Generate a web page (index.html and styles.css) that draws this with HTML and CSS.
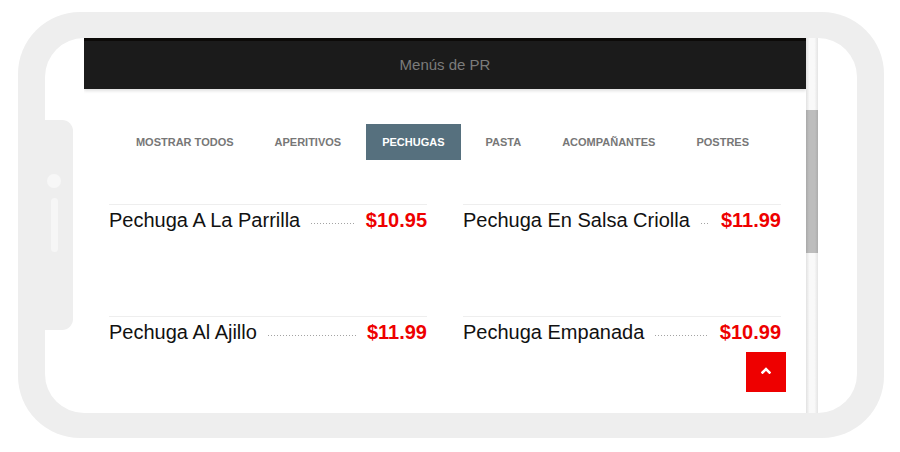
FILE: index.html
```html
<!DOCTYPE html>
<html lang="es">
<head>
<meta charset="utf-8">
<title>Menús de PR</title>
<link rel="stylesheet" href="styles.css">
</head>
<body>
<div class="stage">
  <div class="phone">
    <div class="bump"><span class="bump-dot"></span><span class="bump-line"></span></div>
    <div class="inner">
      <div class="screen">
        <div class="content">
          <header class="header">Menús de PR</header>
          <nav class="tabs">
            <a class="tab">Mostrar todos</a>
            <a class="tab">Aperitivos</a>
            <a class="tab active">Pechugas</a>
            <a class="tab">Pasta</a>
            <a class="tab">Acompañantes</a>
            <a class="tab">Postres</a>
          </nav>
          <div class="menu">
            <div class="item"><div class="row"><span class="name">Pechuga A La Parrilla</span><span class="leader"></span><span class="price">$10.95</span></div></div>
            <div class="item"><div class="row"><span class="name">Pechuga En Salsa Criolla</span><span class="leader"></span><span class="price">$11.99</span></div></div>
            <div class="item"><div class="row"><span class="name">Pechuga Al Ajillo</span><span class="leader"></span><span class="price">$11.99</span></div></div>
            <div class="item"><div class="row"><span class="name">Pechuga Empanada</span><span class="leader"></span><span class="price">$10.99</span></div></div>
          </div>
        </div>
        <div class="scrollbar"><div class="thumb"></div></div>
        <a class="to-top"><svg width="10" height="7" viewBox="0 0 10 7"><polyline points="1.5,5.5 5,2 8.5,5.5" fill="none" stroke="#fff" stroke-width="2.6" stroke-linecap="square"/></svg></a>
      </div>
    </div>
  </div>
</div>
</body>
</html>
```

FILE: styles.css
```css
html, body {
  margin: 0;
  padding: 0;
  background: #fff;
  font-family: "Liberation Sans", Arial, sans-serif;
}
.stage {
  padding: 12px 0 0 18px;
}
.phone {
  position: relative;
  box-sizing: border-box;
  width: 866px;
  height: 426px;
  padding: 26px 27px 25px 27px;
  border-radius: 62px;
  background: #eeeeee;
}
.bump {
  position: absolute;
  left: 27px;
  top: 108px;
  width: 28px;
  height: 210px;
  background: #eeeeee;
  border-radius: 0 11px 11px 0;
  z-index: 2;
}
.bump-dot {
  position: absolute;
  left: 2px;
  top: 54px;
  width: 14px;
  height: 14px;
  border-radius: 50%;
  background: #f7f7f7;
}
.bump-line {
  position: absolute;
  left: 6px;
  top: 78px;
  width: 7px;
  height: 54px;
  border-radius: 4px;
  background: #f6f6f6;
}
.inner {
  box-sizing: border-box;
  height: 100%;
  padding: 0 39px;
  background: #fff;
  border-radius: 39px;
  overflow: hidden;
}
.screen {
  position: relative;
  display: flex;
  height: 100%;
}
.content {
  width: 722px;
  overflow: hidden;
}
.header {
  box-sizing: border-box;
  height: 51px;
  padding-top: 1px;
  border-top: 3px solid #0c0a08;
  background: #1b1b1b;
  color: #7b7b7b;
  font-size: 15px;
  line-height: 46px;
  text-align: center;
  box-shadow: 0 2px 3px rgba(0, 0, 0, 0.12);
}
.tabs {
  display: flex;
  justify-content: center;
  gap: 9px;
  margin-top: 35px;
  padding-right: 5px;
}
.tab {
  padding: 0 16px;
  height: 36px;
  line-height: 36px;
  font-size: 11px;
  font-weight: bold;
  text-transform: uppercase;
  color: #777;
}
.tab.active {
  background: #56707e;
  color: #fff;
}
.menu {
  display: grid;
  grid-template-columns: 318px 318px;
  column-gap: 36px;
  padding: 0 25px;
  margin-top: 44px;
}
.item {
  box-sizing: border-box;
  height: 112px;
  border-top: 1px solid #eeeeee;
  padding-top: 3px;
}
.row {
  display: flex;
  align-items: baseline;
  line-height: 24px;
}
.name {
  font-size: 20px;
  color: #111;
  white-space: nowrap;
}
.leader {
  flex: 1;
  height: 1px;
  margin: 0 11px 0 11px;
  background-image: linear-gradient(to right, #a3a3a3 1px, transparent 1px);
  background-size: 3px 1px;
  background-repeat: repeat-x;
  transform: translateY(-3px);
}
.price {
  font-size: 20px;
  font-weight: bold;
  color: #ee0000;
}
.scrollbar {
  box-sizing: border-box;
  width: 12px;
  height: 100%;
  background: linear-gradient(to right, #e2e2e2, #f9f9f9 30%, #f9f9f9 70%, #e4e4e4);
  padding-top: 72px;
}
.thumb {
  height: 143px;
  background: linear-gradient(to right, #a9a9a9, #bdbdbd 25%, #bdbdbd 75%, #acacac);
}
.to-top {
  position: absolute;
  right: 32px;
  bottom: 21px;
  width: 40px;
  height: 40px;
  background: #ee0000;
  display: flex;
  align-items: center;
  justify-content: center;
}
.to-top svg {
  display: block;
  margin-top: -3px;
}
```
